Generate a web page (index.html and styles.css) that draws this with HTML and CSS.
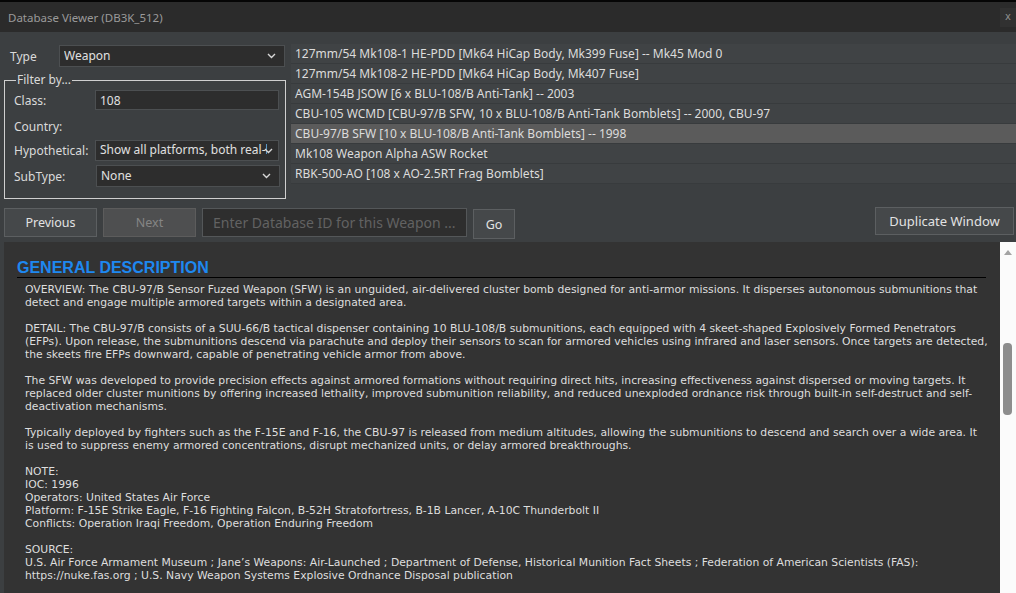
FILE: index.html
```html
<!DOCTYPE html>
<html lang="en">
<head>
    <meta charset="UTF-8">
    <title>Database Viewer</title>
    <link rel="stylesheet" href="styles.css">
</head>
<body>

<div class="window">
    <div class="titlebar">
        <span class="title">Database Viewer (DB3K_512)</span>
        <span class="close">x</span>
    </div>

    <div class="top">
        <div class="filters">
            <div class="type-row">
                <label>Type</label>
                <div class="select type-select">
                    <span class="select-text">Weapon</span>
                    <svg class="chev" width="9" height="6" viewBox="0 0 9 6"><path d="M1 1l3.5 3.5L8 1" fill="none" stroke="#d8d8d8" stroke-width="1.4"/></svg>
                </div>
            </div>

            <fieldset class="filter-box">
                <legend>Filter by...</legend>
                <div class="frow r-class">
                    <label>Class:</label>
                    <div class="input">108</div>
                </div>
                <div class="frow r-country">
                    <label>Country:</label>
                </div>
                <div class="frow r-hypo">
                    <label>Hypothetical:</label>
                    <div class="select">
                        <span class="select-text">Show all platforms, both real-life and hypothetical</span>
                        <svg class="chev" width="9" height="6" viewBox="0 0 9 6"><path d="M1 1l3.5 3.5L8 1" fill="none" stroke="#d8d8d8" stroke-width="1.4"/></svg>
                    </div>
                </div>
                <div class="frow r-sub">
                    <label>SubType:</label>
                    <div class="select">
                        <span class="select-text">None</span>
                        <svg class="chev" width="9" height="6" viewBox="0 0 9 6"><path d="M1 1l3.5 3.5L8 1" fill="none" stroke="#d8d8d8" stroke-width="1.4"/></svg>
                    </div>
                </div>
            </fieldset>
        </div>

        <div class="result-list">
            <div class="item">127mm/54 Mk108-1 HE-PDD [Mk64 HiCap Body, Mk399 Fuse] -- Mk45 Mod 0</div>
            <div class="item">127mm/54 Mk108-2 HE-PDD [Mk64 HiCap Body, Mk407 Fuse]</div>
            <div class="item">AGM-154B JSOW [6 x BLU-108/B Anti-Tank] -- 2003</div>
            <div class="item">CBU-105 WCMD [CBU-97/B SFW, 10 x BLU-108/B Anti-Tank Bomblets] -- 2000, CBU-97</div>
            <div class="item active">CBU-97/B SFW [10 x BLU-108/B Anti-Tank Bomblets] -- 1998</div>
            <div class="item">Mk108 Weapon Alpha ASW Rocket</div>
            <div class="item">RBK-500-AO [108 x AO-2.5RT Frag Bomblets]</div>
        </div>
    </div>

    <div class="nav-row">
        <button class="btn btn-prev">Previous</button>
        <button class="btn btn-next" disabled>Next</button>
        <input class="id-input" type="text" placeholder="Enter Database ID for this Weapon ...">
        <button class="btn btn-go">Go</button>
        <span class="spacer"></span>
        <button class="btn btn-dup">Duplicate Window</button>
    </div>

    <div class="content">
        <div class="doc">
            <h2 class="doc-title">GENERAL DESCRIPTION</h2>
            <div class="doc-body">
                <p>OVERVIEW: The CBU-97/B Sensor Fuzed Weapon (SFW) is an unguided, air-delivered cluster bomb designed for anti-armor missions. It disperses autonomous submunitions that<br>detect and engage multiple armored targets within a designated area.</p>
                <p>DETAIL: The CBU-97/B consists of a SUU-66/B tactical dispenser containing 10 BLU-108/B submunitions, each equipped with 4 skeet-shaped Explosively Formed Penetrators<br>(EFPs). Upon release, the submunitions descend via parachute and deploy their sensors to scan for armored vehicles using infrared and laser sensors. Once targets are detected,<br>the skeets fire EFPs downward, capable of penetrating vehicle armor from above.</p>
                <p>The SFW was developed to provide precision effects against armored formations without requiring direct hits, increasing effectiveness against dispersed or moving targets. It<br>replaced older cluster munitions by offering increased lethality, improved submunition reliability, and reduced unexploded ordnance risk through built-in self-destruct and self-<br>deactivation mechanisms.</p>
                <p>Typically deployed by fighters such as the F-15E and F-16, the CBU-97 is released from medium altitudes, allowing the submunitions to descend and search over a wide area. It<br>is used to suppress enemy armored concentrations, disrupt mechanized units, or delay armored breakthroughs.</p>
                <p>NOTE:<br>IOC: 1996<br>Operators: United States Air Force<br>Platform: F-15E Strike Eagle, F-16 Fighting Falcon, B-52H Stratofortress, B-1B Lancer, A-10C Thunderbolt II<br>Conflicts: Operation Iraqi Freedom, Operation Enduring Freedom</p>
                <p>SOURCE:<br>U.S. Air Force Armament Museum ; Jane’s Weapons: Air-Launched ; Department of Defense, Historical Munition Fact Sheets ; Federation of American Scientists (FAS):<br>https://nuke.fas.org ; U.S. Navy Weapon Systems Explosive Ordnance Disposal publication</p>
            </div>
        </div>
        <div class="scrollbar">
            <span class="arrow-up"></span>
            <span class="thumb"></span>
        </div>
    </div>
</div>

</body>
</html>
```

FILE: styles.css
```css
* {
    box-sizing: border-box;
}

body {
    margin: 0;
    background: #3c3f41;
    color: #dadada;
    font-family: "Noto Sans", "Open Sans", sans-serif;
    font-size: 12px;
    overflow: hidden;
}

.window {
    height: 593px;
    display: flex;
    flex-direction: column;
}

/* title bar */
.titlebar {
    height: 32px;
    flex: none;
    border-top: 2px solid #050505;
    background: #2b2b2b;
    display: flex;
    align-items: center;
    justify-content: space-between;
    padding-left: 8px;
}

.title {
    color: #9a9a9a;
    font-size: 11.5px;
}

.close {
    width: 16px;
    height: 19px;
    margin-top: 1px;
    background: #313131;
    color: #8e8e8e;
    font-family: "DejaVu Sans", sans-serif;
    font-size: 10px;
    text-align: center;
    line-height: 18px;
}

/* top area */
.top {
    display: flex;
    flex: none;
    height: 170px;
    padding: 11px 0 0 4px;
}

.filters {
    width: 286px;
    flex: none;
}

.type-row {
    display: flex;
    align-items: center;
    height: 22px;
    margin-top: 2px;
}

.type-row label {
    width: 55px;
    padding-left: 6px;
}

.select, .input {
    height: 21px;
    background: #2d2d2d;
    border: 1px solid #4c4f51;
    display: flex;
    align-items: center;
    padding: 0 8px 0 4px;
    color: #e0e0e0;
}

.select {
    justify-content: space-between;
}

.select-text {
    white-space: nowrap;
    overflow: hidden;
    flex: 1;
    margin-top: -2px;
}

.chev {
    flex: none;
    margin-left: 2px;
}

.type-select {
    width: 226px;
    height: 22px;
}

.filter-box {
    margin: 7px 0 0 0;
    width: 281px;
    height: 125px;
    border: 1px solid #cfcfcf;
    padding: 0 5px 0 9px;
}

.filter-box legend {
    padding: 0 1px;
    margin-left: 2px;
    line-height: 12px;
}

.frow {
    display: flex;
    align-items: center;
}

.frow label {
    width: 81px;
    flex: none;
}

.frow .select, .frow .input {
    width: 184px;
}

.r-class {
    height: 20px;
    margin-top: 4px;
}

.r-class .input {
    height: 20px;
}

.r-country {
    height: 27px;
    margin-top: 3px;
}

.r-hypo {
    height: 21px;
}

.r-hypo .select {
    padding-right: 5px;
}

.r-hypo .chev {
    margin-left: -3px;
}

.r-sub {
    height: 22px;
    margin-top: 4px;
}

.r-sub .select {
    height: 22px;
    margin-left: 1px;
}

.result-list {
    flex: 1;
    padding-left: 1px;
    margin-top: 1px;
}

.item {
    height: 20px;
    line-height: 19px;
    padding-left: 4px;
    background: #404345;
    border-bottom: 1px solid #383b3d;
    color: #dcdcdc;
    white-space: nowrap;
    overflow: hidden;
}

.item.active {
    background: #5b5b5b;
}

/* navigation row */
.nav-row {
    display: flex;
    flex: none;
    align-items: flex-start;
    padding: 6px 2px 0 4px;
    height: 40px;
}

.btn {
    height: 29px;
    background: #45484a;
    border: 1px solid #5c5f61;
    color: #e2e2e2;
    font-family: "Noto Sans", sans-serif;
    font-size: 12.5px;
    padding: 0;
}

.btn-prev {
    width: 93px;
}

.btn-next {
    width: 93px;
    margin-left: 6px;
    background: #4e4f50;
    color: #858585;
    border-color: #5c5c5c;
}

.id-input {
    width: 265px;
    height: 29px;
    margin-left: 6px;
    background: #2e2e2e;
    border: 1px solid #545759;
    color: #ddd;
    font-family: "Noto Sans", sans-serif;
    font-size: 14px;
    padding: 0 10px;
}

.id-input::placeholder {
    color: #626262;
}

.btn-go {
    width: 42px;
    height: 30px;
    margin: 1px 0 0 6px;
}

.spacer {
    flex: 1;
}

.btn-dup {
    width: 139px;
    height: 28px;
    margin-top: -1px;
    font-size: 13px;
}

/* description */
.content {
    flex: 1;
    display: flex;
    margin-left: 4px;
    background: #333333;
    min-height: 0;
}

.doc {
    flex: 1;
    padding: 17px 14px 0 13px;
    overflow: hidden;
}

.doc-title {
    margin: 0;
    font-family: "Liberation Sans", Arial, sans-serif;
    font-weight: bold;
    font-size: 16px;
    line-height: 18px;
    color: #1e88f0;
    border-bottom: 1px solid #000;
    padding-bottom: 0;
}

.doc-body {
    padding: 5px 0 0 8px;
    font-family: "DejaVu Sans", Verdana, sans-serif;
    font-size: 10.8px;
    line-height: 13px;
    color: #dedede;
    white-space: nowrap;
}

.doc-body p {
    margin: 0 0 13px 0;
}

.scrollbar {
    width: 16px;
    flex: none;
    background: #fbfbfb;
    position: relative;
}

.arrow-up {
    position: absolute;
    top: 8px;
    left: 4px;
    border-left: 4px solid transparent;
    border-right: 4px solid transparent;
    border-bottom: 5px solid #a3a3a3;
}

.thumb {
    position: absolute;
    top: 101px;
    left: 3px;
    width: 9px;
    height: 72px;
    border-radius: 4px;
    background: #8d8d8d;
}
```
